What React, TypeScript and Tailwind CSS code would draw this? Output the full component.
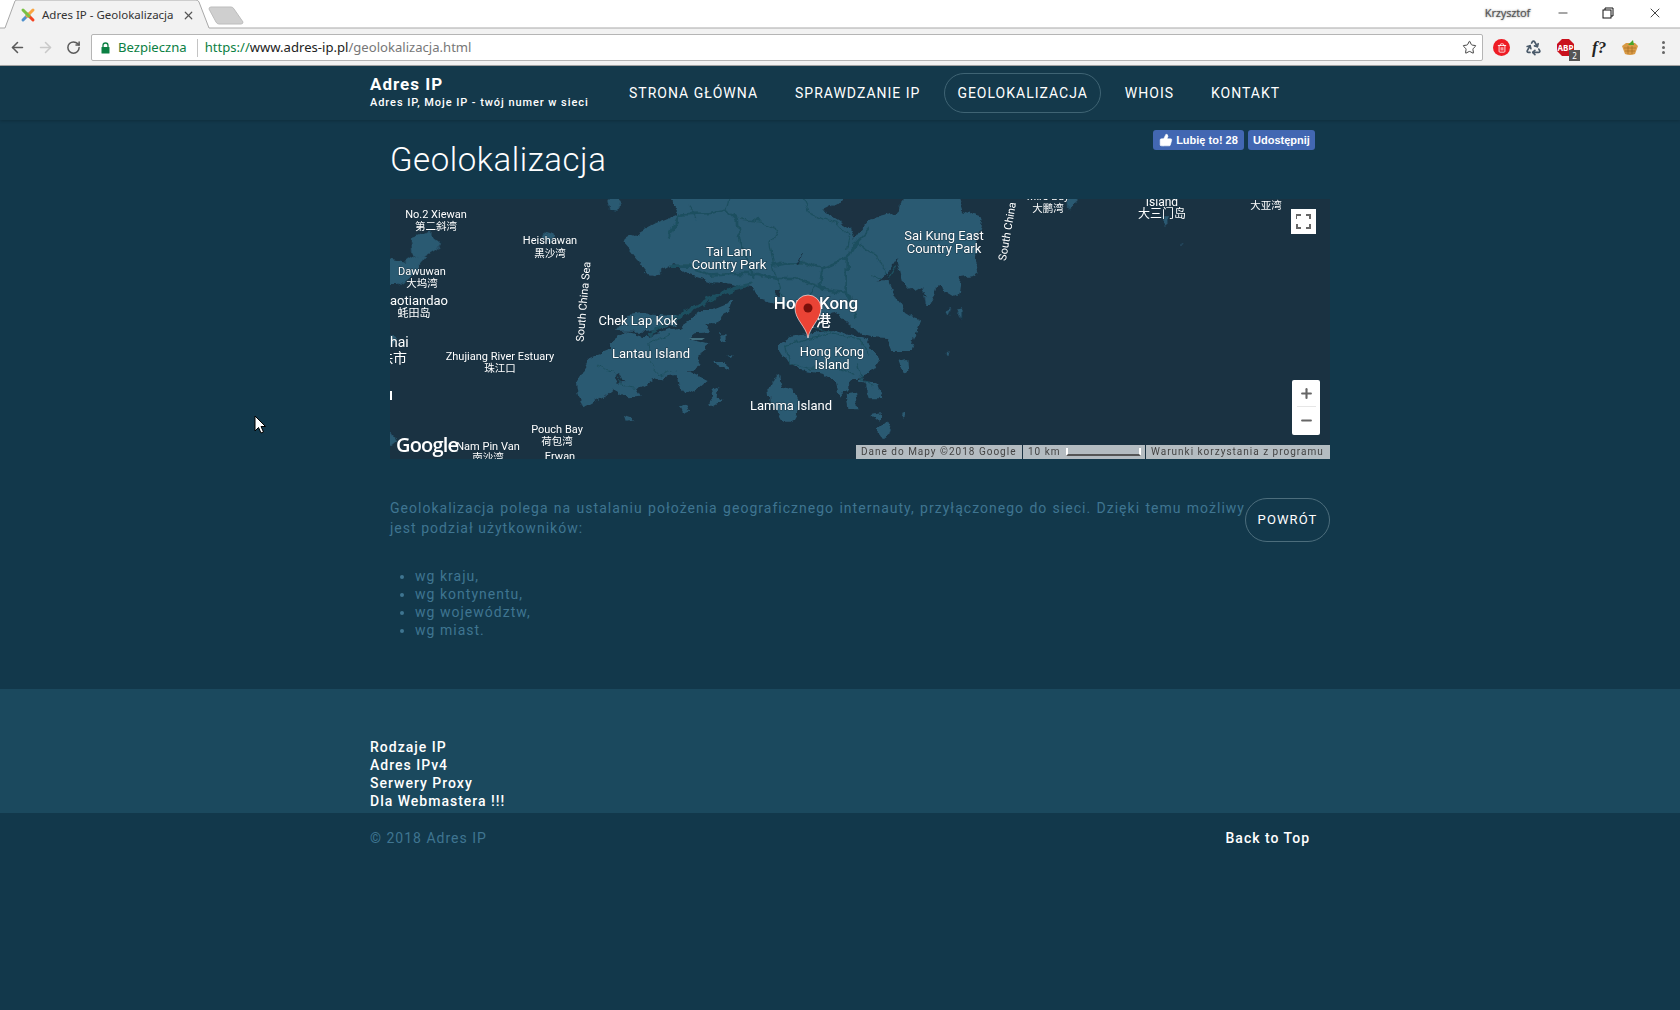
import { ArrowLeft, ArrowRight, RotateCw, Star, X, ThumbsUp, Minus, Plus, Recycle, Trash2 } from "lucide-react";

function Favicon() {
  return (
    <svg width="16" height="16" viewBox="0 0 16 16" className="shrink-0" fill="none" strokeWidth="3" strokeLinecap="round">
      <path d="M3 13 L9 7" stroke="#5091cd" />
      <path d="M13 13 L7 7" stroke="#f44321" />
      <path d="M13 3 L7 9" stroke="#f9a541" />
      <path d="M3 3 L9 9" stroke="#7ac143" />
    </svg>
  );
}

function BrowserChrome() {
  return (
    <div className="h-[66px] shrink-0 font-['Noto_Sans',sans-serif]">
      <div className="relative flex h-[28px] items-center bg-white">
        <svg width="1680" height="29" className="absolute left-0 top-0">
          <path d="M0 28 H5 L15 1 Q15.5 0 17 0 H196 Q198 0 199 2 L209 28 H1680 V29 H0 Z" fill="#f2f2f2" stroke="none" />
          <path d="M0 28 H5 L15 1 Q15.5 0 17 0 H196 Q198 0 199 2 L209 28 H1680" fill="none" stroke="#a8a8a8" />
          <path d="M209 9 Q209 7 211 7 H231 Q233 7 234 9 L243 22 Q243 24 241 24 H219 Q217 24 216 22 Z" fill="#cfcfcf" stroke="#bdbdbd" />
        </svg>
        <div className="relative ml-[20px] mt-[2px] flex w-[178px] items-center">
          <Favicon />
          <span className="ml-[6px] w-[131px] whitespace-nowrap text-[11.5px] text-[#333]">Adres IP - Geolokalizacja</span>
          <X size={13} strokeWidth={2.2} className="ml-[9px] text-[#555]" />
        </div>
        <div className="relative mb-[2px] ml-auto flex items-center">
          <span className="mr-[26px] text-[11px] tracking-[-0.2px] text-[#555] [text-shadow:0_0_2px_#777]">Krzysztof</span>
          <Minus size={14} strokeWidth={1.2} className="mr-[32px] text-black" />
          <svg width="12" height="12" viewBox="0 0 12 12" className="mr-[33px]" fill="none" stroke="#111">
            <rect x="1" y="3" width="8" height="8" fill="#fff" />
            <path d="M3 3 V1 H11 V9 H9" />
          </svg>
          <X size={16} strokeWidth={1.1} className="mr-[17px] text-black" />
        </div>
      </div>
      <div className="flex h-[38px] items-center border-b border-[#a8a8a8] bg-[#f2f2f2] pt-[2px]">
        <ArrowLeft size={17} strokeWidth={2.2} className="ml-[9px] text-[#5a5a5a]" />
        <ArrowRight size={17} strokeWidth={2.2} className="ml-[11px] text-[#c9c9c9]" />
        <RotateCw size={15} strokeWidth={2.4} className="ml-[12px] text-[#5a5a5a]" />
        <div className="ml-[10px] flex h-[27px] w-[1392px] items-center rounded-[2px] border border-[#b5b5b5] bg-white text-[13.1px]">
          <svg width="9" height="12" viewBox="0 0 9 12" className="ml-[9px]">
            <path d="M2 5 V3.5 A2.5 2.5 0 0 1 7 3.5 V5" stroke="#0b8043" strokeWidth="1.3" fill="none" />
            <rect x="0.5" y="5" width="8" height="6.5" rx="0.5" fill="#0b8043" />
          </svg>
          <span className="ml-[8px] text-[#0b8043]">Bezpieczna</span>
          <span className="ml-[10px] h-[18px] w-px bg-[#c4c4c4]" />
          <span className="ml-[7px] text-[#0b8043]">https://</span>
          <span className="text-[#222]">www.adres-ip.pl</span>
          <span className="text-[#777]">/geolokalizacja.html</span>
          <Star size={15} strokeWidth={1.6} className="ml-auto mr-[5px] text-[#444]" />
        </div>
        <div className="ml-[10px] flex h-[17px] w-[17px] items-center justify-center rounded-full bg-[#ee1c25]">
          <Trash2 size={10} strokeWidth={2} className="text-white" />
        </div>
        <Recycle size={17} strokeWidth={2.4} className="ml-[15px] text-[#4a5a6a]" />
        <div className="relative ml-[15px] h-[17px] w-[17px]">
          <svg width="17" height="17" viewBox="0 0 17 17">
            <path d="M5 0 H12 L17 5 V12 L12 17 H5 L0 12 V5 Z" fill="#c9101c" />
          </svg>
          <span className="absolute inset-0 flex items-center justify-center text-[8px] font-bold text-white">ABP</span>
          <span className="absolute -bottom-[5px] -right-[6px] flex h-[11px] w-[11px] items-center justify-center bg-[#555] text-[8px] text-white">2</span>
        </div>
        <span className="ml-[18px] font-['Liberation_Serif',serif] text-[17px] font-bold italic text-[#222]">f?</span>
        <svg width="18" height="16" viewBox="0 0 18 16" className="ml-[15px]">
          <path d="M1 6 L5 3 H14 L17 6 L14 14 Q9 16 4 14 Z" fill="#d99a45" />
          <path d="M3 8 L15 8 M4 11 L14 11 M7 6 L7 14 M11 6 L11 14" stroke="#a86f24" strokeWidth="0.7" />
          <path d="M7 5 L12 0 L13 5 Z" fill="#4aa42a" />
        </svg>
        <div className="ml-[23px] flex flex-col gap-[2px]">
          <span className="h-[3px] w-[3px] rounded-full bg-[#666]" />
          <span className="h-[3px] w-[3px] rounded-full bg-[#666]" />
          <span className="h-[3px] w-[3px] rounded-full bg-[#666]" />
        </div>
      </div>
    </div>
  );
}

function NavBar() {
  return (
    <div className="flex h-[54px] shrink-0 items-center bg-[#14394b] pl-[370px] tracking-[1px] shadow-[0_1px_3px_rgba(0,0,0,0.2)]">
      <div className="mb-[2px] w-[246px] text-white">
        <div className="text-[17px] font-bold leading-[20px]">Adres IP</div>
        <div className="mt-[2px] text-[11px] font-medium leading-[14px] tracking-[0.93px]">Adres IP, Moje IP - twój numer w sieci</div>
      </div>
      <div className="flex items-center text-[14px] uppercase tracking-[1px] text-white">
        <span className="px-[13px]">Strona główna</span>
        <span className="ml-[11px] px-[13px]">Sprawdzanie IP</span>
        <span className="ml-[11px] flex h-[40px] items-center rounded-[20px] border border-[#3f6474] px-[12px]">Geolokalizacja</span>
        <span className="ml-[11px] px-[13px]">Whois</span>
        <span className="ml-[11px] px-[13px]">Kontakt</span>
      </div>
    </div>
  );
}

function FbButtons() {
  return (
    <div className="flex gap-[4px] font-['Liberation_Sans',sans-serif] text-[11px] font-bold text-white">
      <div className="flex h-[20px] w-[91px] items-center justify-center gap-[3px] rounded-[3px] bg-[#4267b2]">
        <ThumbsUp size={14} fill="#fff" strokeWidth={1} />
        <span>Lubię to! 28</span>
      </div>
      <div className="flex h-[20px] w-[67px] items-center justify-center rounded-[3px] bg-[#4267b2]">Udostępnij</div>
    </div>
  );
}

type LabelProps = { x: number; y: number; s?: number; w?: number; a?: "start" | "middle" | "end"; t: string; r?: number };

function L({ x, y, s = 11, w = 400, a = "middle", t, r }: LabelProps) {
  return (
    <text
      x={x}
      y={y}
      fontSize={s}
      fontWeight={w}
      textAnchor={a}
      fill="#fff"
      stroke="#1a3242"
      strokeWidth="1.2"
      strokeOpacity="0.7"
      paintOrder="stroke"
      transform={r ? `rotate(${r} ${x} ${y})` : undefined}
      fontFamily="Roboto, 'Noto Sans CJK SC', sans-serif"
    >
      {t}
    </text>
  );
}

const LAND = "#2b5a72";
const WATER = "#1a3242";
const ROAD = "#1e5060";

function MapDrawing() {
  return (
    <svg viewBox="390 199 940 260" className="block h-[260px] w-[940px]">
      <defs>
        {/* roughens the hand-traced coastlines */}
        <filter id="coast" filterUnits="userSpaceOnUse" x="390" y="199" width="940" height="260">
          <feTurbulence type="fractalNoise" baseFrequency="0.09" numOctaves="3" seed="4" />
          <feDisplacementMap in="SourceGraphic" scale="9" xChannelSelector="R" yChannelSelector="G" />
        </filter>
      </defs>
      <rect x="390" y="199" width="940" height="260" fill={WATER} />
      <g filter="url(#coast)">
        {/* new territories, page coordinates */}
        <path
          fill={LAND}
          d="M668 195 L678 215 L655 224 L640 232 L623 242 L630 250 L638 260 L645 270 L652 278 L662 270 L675 263 L690 275 L713 282 L737 286 L753 288 L758 299 L777 304 L797 307 L808 320 L833 312 L853 326 L862 335 L870 337 L887 338 L892 350 L910 350 L915 335 L921 320 L915 318 L905 312 L897 300 L890 285 L888 272 L897 258 L903 282 L915 292 L922 288 L930 305 L937 285 L947 292 L957 298 L960 278 L972 276 L978 272 L975 255 L977 238 L983 218 L963 212 L957 195 Z"
        />
        <g transform="translate(385 195) scale(0.3333)" fill={LAND}>
          <path d="M5 190 L60 200 L90 180 L120 190 L80 240 L40 270 L5 270 Z" />
          <path d="M80 130 L130 110 L165 140 L150 165 L110 190 L85 175 Z" />
          <path d="M5 420 L30 430 L5 470 Z" />
          <path d="M480 110 L510 120 L500 145 L470 130 Z" />
          <path d="M670 0 L705 0 L695 50 L680 48 Z" />
          <path d="M5 705 L30 740 L5 760 Z" />
        </g>
        {/* lantau and the islands round it, from a 3x crop at 570,300 */}
        <g transform="translate(570 300) scale(0.3333)">
          <g fill={LAND}>
            <path d="M135 95 L175 45 L215 40 L320 45 L320 75 L230 95 L150 95 Z" />
            <path d="M20 245 L50 195 L60 175 L120 150 L120 130 L170 95 L230 110 L320 85 L400 30 L440 20 L490 0 L480 30 L450 50 L440 70 L405 70 L420 95 L380 100 L360 115 L415 130 L410 155 L385 165 L395 190 L360 215 L410 240 L380 265 L345 285 L325 260 L320 225 L260 235 L200 265 L215 290 L170 295 L130 265 L100 290 L40 325 L25 280 Z" />
            <path d="M430 180 L470 180 L475 215 L445 200 Z" />
            <path d="M450 100 L470 100 L470 125 L455 120 Z" />
            <path d="M475 170 L490 165 L490 178 Z" />
            <path d="M330 320 L350 310 L358 335 L340 342 Z" />
            <path d="M415 310 L430 290 L425 270 L445 265 L440 290 L458 300 L420 322 Z" />
            <path d="M165 350 L195 360 L170 365 Z" />
            <path d="M595 270 L610 235 L630 225 L640 260 L670 270 L690 310 L660 365 L640 365 L620 330 L600 310 Z" />
          </g>
          <path d="M135 235 L150 225 L160 245 L140 252 Z" fill={WATER} />
          <g fill="none" stroke={ROAD} strokeWidth="3">
            <path d="M230 130 L240 190 L270 225 L320 210" />
            <path d="M80 195 L130 215 L160 260 L200 265" />
            <path d="M230 130 L300 100" />
          </g>
        </g>
        {/* hong kong island and the eastern islets, from a 3x crop at 780,320 */}
        <g transform="translate(780 320) scale(0.3333)">
          <g fill={LAND}>
            <path d="M0 70 L30 50 L160 30 L260 60 L300 120 L280 150 L240 170 L240 185 L290 190 L305 235 L270 235 L250 170 L220 185 L180 230 L170 190 L120 160 L60 150 L20 120 L0 90 Z" />
            <path d="M200 220 L225 215 L232 265 L205 265 Z" />
            <path d="M275 285 L300 280 L300 298 L280 302 Z" />
            <path d="M288 330 L320 302 L340 330 L305 355 Z" />
            <path d="M355 125 L385 120 L388 150 L370 165 Z" />
            <path d="M360 285 L372 280 L370 298 Z" />
            <path d="M495 100 L506 90 L502 110 Z" />
          </g>
          <g fill="none" stroke={ROAD} strokeWidth="4">
            <path d="M20 80 L30 130 L90 145 L170 140 L220 160" />
            <path d="M20 80 L80 55 L160 40 L230 60 L270 100" />
            <path d="M230 130 L250 180 L280 200" />
            <path d="M60 0 L100 25 L160 35" />
          </g>
        </g>
        {/* roads over the new territories and tolo harbour, from a 3x crop at 690,199 */}
        <g transform="translate(690 199) scale(0.3333)">
          <path d="M400 35 L440 15 L470 -20 L640 -20 L625 40 L600 45 L540 60 L515 90 L490 125 L480 85 L440 60 Z" fill={WATER} />
          <g fill="none" stroke={ROAD} strokeWidth="8" strokeLinejoin="round">
            <path d="M-60 110 L-30 50 L60 45 L110 35 L140 65 L150 130 L175 195 L190 240" />
            <path d="M-60 200 L0 200 L60 230 L130 225 L200 225 L260 240 L320 240 L380 260 L400 270 L470 280" />
            <path d="M250 200 L300 190 L340 190 L400 210 L470 180 L500 130 L545 85" />
            <path d="M400 210 L390 250 L400 270" />
            <path d="M470 180 L470 280 L500 360" />
            <path d="M-130 410 L-60 370 L0 335 L60 300 L130 270 L190 255" strokeWidth="10" />
          </g>
          <g fill="none" stroke={ROAD} strokeWidth="4">
            <path d="M150 60 L220 70 L265 95 L240 130 L250 200 L260 240 L280 290" />
            <path d="M330 -20 L360 45 L440 70 L480 110 L470 150" />
            <path d="M110 35 L125 -20" />
            <path d="M500 130 L560 170 L600 250" />
            <path d="M380 260 L330 320" />
            <path d="M545 230 L590 250 L620 200" />
            <path d="M20 60 L0 20" />
          </g>
          <path d="M325 195 L340 165 L330 190 Z" fill={WATER} stroke={WATER} strokeWidth="2" />
          <path d="M255 270 L275 270 L270 295 Z" fill={WATER} />
          <path d="M560 250 L590 220 L600 250 Z" fill={WATER} />
        </g>
        <g transform="translate(860 195) scale(0.3333)" fill={LAND}>
          <path d="M190 300 L220 310 L215 330 L195 330 Z" />
          <path d="M260 345 L280 335 L270 360 Z" />
          <path d="M290 350 L305 345 L305 375 Z" />
          <path d="M620 0 L665 0 L625 42 Z" />
          <path d="M905 70 L935 70 L915 90 Z" />
          <path d="M955 150 L968 148 L960 156 Z" />
        </g>
      </g>
      <path d="M689 338 H705 L702 340 H692 Z" fill="#44707f" />
      <L x={436} y={218} s={11} t="No.2 Xiewan" />
      <L x={436} y={230} s={10.5} t="第二斜湾" />
      <L x={550} y={244} s={11} t="Heishawan" />
      <L x={550} y={257} s={10.5} t="黑沙湾" />
      <L x={422} y={275} s={11} t="Dawuwan" />
      <L x={422} y={287} s={10.5} t="大坞湾" />
      <L x={390} y={305} s={13} a="start" t="aotiandao" />
      <L x={414} y={317} s={11} t="蚝田岛" />
      <L x={390} y={347} s={14} a="start" t="hai" />
      <L x={407} y={363} s={14} a="end" t="珠市" />
      <rect x="390" y="391" width="2" height="9" fill="#fff" />
      <L x={500} y={360} s={11} t="Zhujiang River Estuary" />
      <L x={500} y={372} s={10.5} t="珠江口" />
      <L x={587} y={302} s={11} r={-85} t="South China Sea" />
      <L x={638} y={325} s={13} t="Chek Lap Kok" />
      <L x={651} y={358} s={13} t="Lantau Island" />
      <L x={729} y={256} s={13} t="Tai Lam" />
      <L x={729} y={269} s={13} t="Country Park" />
      <L x={816} y={309} s={17} w={500} t="Hong Kong" />
      <L x={816} y={326} s={15} w={500} t="香港" />
      <L x={832} y={356} s={13} t="Hong Kong" />
      <L x={832} y={369} s={13} t="Island" />
      <L x={791} y={410} s={13} t="Lamma Island" />
      <L x={557} y={433} s={11} t="Pouch Bay" />
      <L x={557} y={445} s={10.5} t="荷包湾" />
      <L x={488} y={450} s={11} t="Nam Pin Van" />
      <L x={488} y={461} s={10.5} t="南沙湾" />
      <L x={560} y={460} s={11} t="Erwan" />
      <L x={944} y={240} s={13} t="Sai Kung East" />
      <L x={944} y={253} s={13} t="Country Park" />
      <L x={1011} y={232} s={11} r={-80} t="South China" />
      <L x={1048} y={200} s={11} t="Mirs Bay" />
      <L x={1048} y={212} s={10.5} t="大鹏湾" />
      <L x={1162} y={206} s={12} t="Island" />
      <L x={1162} y={218} s={12} t="大三门岛" />
      <L x={1266} y={209} s={10.5} t="大亚湾" />
      {/* marker */}
      <path d="M808 338 C806 326 795 320 795 308 A13 13 0 0 1 821 308 C821 320 810 326 808 338 Z" fill="#ea4335" stroke="#fff" strokeWidth="0.6" />
      <circle cx="808" cy="308" r="4.5" fill="#7a0f0a" />
      <text x="396" y="452" fontSize="20" fontWeight="600" fill="#fff" fontFamily="'Open Sans', sans-serif" letterSpacing="-0.8">Google</text>
    </svg>
  );
}

function MapBox() {
  return (
    <div className="relative h-[260px] w-[940px] overflow-hidden">
      <MapDrawing />
      <div className="absolute right-[14px] top-[10px] flex h-[25px] w-[25px] items-center justify-center bg-white">
        <svg width="15" height="15" viewBox="0 0 15 15" fill="none" stroke="#666" strokeWidth="2">
          <path d="M0 5 V1 H5 M10 1 H15 M14 0 V5 M1 10 V14 H5 M10 14 H14 V10" />
        </svg>
      </div>
      <div className="absolute right-[10px] top-[181px] flex h-[55px] w-[28px] flex-col items-center rounded-[2px] bg-white text-[#666]">
        <Plus size={15} strokeWidth={3.4} className="mt-[6px]" />
        <span className="mt-[5px] h-px w-[19px] bg-[#e6e6e6]" />
        <Minus size={15} strokeWidth={3.4} className="mt-[6px]" />
      </div>
      <div className="absolute bottom-0 right-0 flex h-[14px] gap-px text-[10px] leading-[14px] tracking-[1px] text-[#444]">
        <span className="w-[166px] bg-[#b4bcc1] pl-[5px]">Dane do Mapy ©2018 Google</span>
        <span className="flex w-[122px] items-center bg-[#b4bcc1] pl-[5px]">
          10 km
          <span className="ml-[5px] h-[8px] w-[75px] border-x-2 border-b-2 border-x-white border-b-[#555]" />
        </span>
        <span className="w-[184px] bg-[#b4bcc1] pl-[5px]">Warunki korzystania z programu</span>
      </div>
    </div>
  );
}

function Content() {
  return (
    <main className="ml-[390px] flex h-[569px] w-[940px] shrink-0 flex-col">
      <div className="flex h-[79px] items-start justify-between">
        <h1 className="mt-[20px] text-[33px] font-light leading-[40px] tracking-[0.55px] text-white">Geolokalizacja</h1>
        <div className="mr-[15px] mt-[10px]">
          <FbButtons />
        </div>
      </div>
      <MapBox />
      <div className="mt-[39px] flex items-start">
        <p className="w-[855px] text-justify text-[14px] leading-[20px] tracking-[1.02px] text-[#3f7591]">
          Geolokalizacja polega na ustalaniu położenia geograficznego internauty, przyłączonego do sieci. Dzięki temu możliwy jest podział użytkowników:
        </p>
        <a className="flex h-[44px] w-[85px] items-center justify-center rounded-[22px] border border-[#4c6d7c] text-[13px] tracking-[1.1px] text-white">POWRÓT</a>
      </div>
      <ul className="mt-[25px] list-disc pl-[25px] text-[14px] leading-[18px] tracking-[1.02px] text-[#3f7591]">
        <li>wg kraju,</li>
        <li>wg kontynentu,</li>
        <li>wg województw,</li>
        <li>wg miast.</li>
      </ul>
    </main>
  );
}

function Footer() {
  return (
    <>
      <div className="flex h-[124px] shrink-0 flex-col justify-end bg-[#1b495e] pb-[3px] pl-[370px] text-[14px] font-medium leading-[18px] tracking-[1px] text-white">
        <a>Rodzaje IP</a>
        <a>Adres IPv4</a>
        <a>Serwery Proxy</a>
        <a>Dla Webmastera !!!</a>
      </div>
      <div className="flex items-center justify-between pl-[370px] pr-[370px] pt-[16px] text-[14px] leading-[18px] tracking-[1px]">
        <span className="text-[#3f7591]">© 2018 Adres IP</span>
        <a className="font-medium text-white">Back to Top</a>
      </div>
    </>
  );
}

function Cursor() {
  return (
    <svg width="12" height="20" viewBox="0 0 12 20" className="absolute left-[254px] top-[415px]">
      <path d="M1 1 V16 L4.5 12.5 L7 18 L9.5 17 L7 11.5 H11.5 Z" fill="#fff" stroke="#000" strokeWidth="1" />
    </svg>
  );
}

export default function App() {
  return (
    <div className="relative flex h-[1010px] w-[1680px] flex-col overflow-hidden bg-[#12384b] font-['Roboto',sans-serif]">
      <BrowserChrome />
      <NavBar />
      <Content />
      <Footer />
      <Cursor />
    </div>
  );
}
